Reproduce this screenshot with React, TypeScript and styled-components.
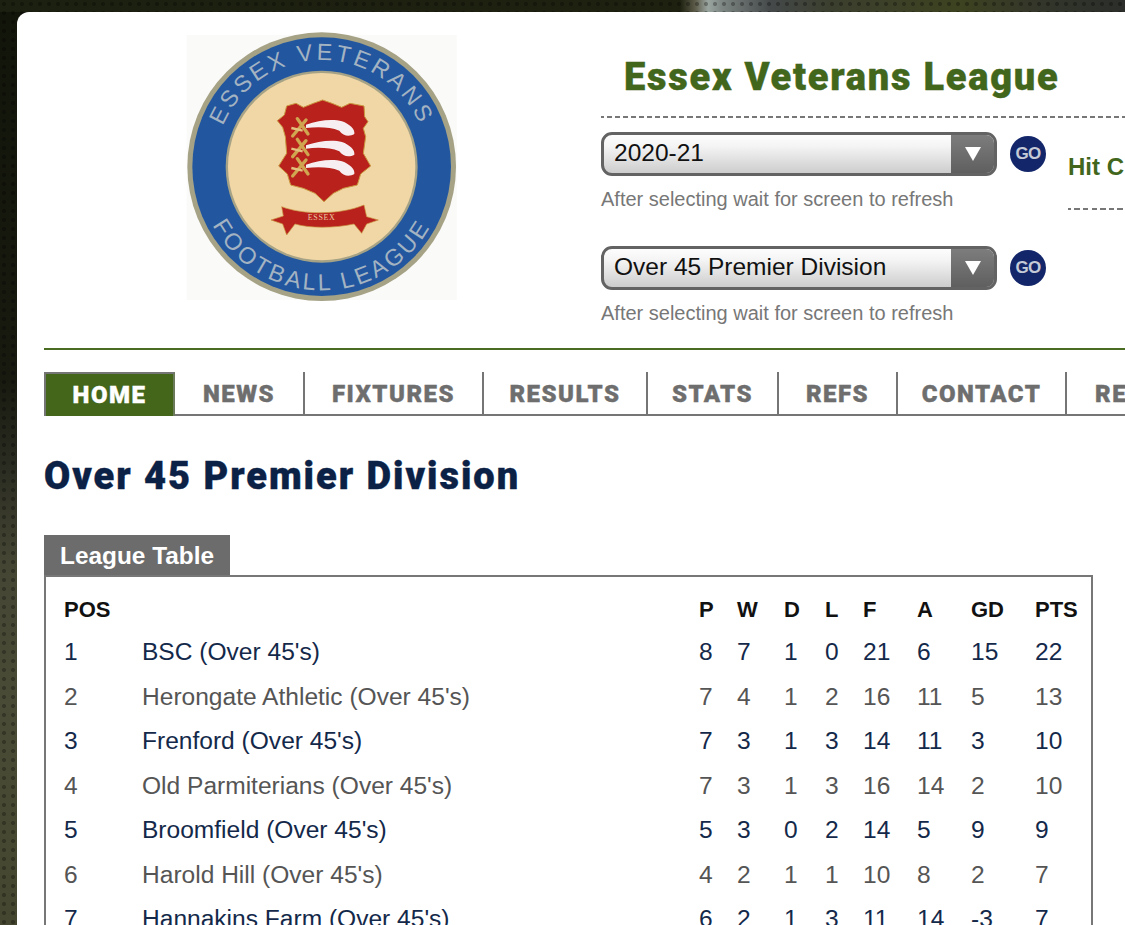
import React from "react";
import styled, { createGlobalStyle } from "styled-components";

const Global = createGlobalStyle`
  html, body { margin: 0; padding: 0; height: 925px; overflow: hidden; }
  body {
    font-family: "Liberation Sans", Arial, sans-serif;
    background-color: #1b1e10;
    background-image:
      radial-gradient(circle at 4px 4px, rgba(0,0,0,.28) 1.6px, transparent 2.4px),
      linear-gradient(90deg, #1c2010 0, #1e2110 680px, #5c5a48 695px, #9aa5a0 708px, #7d8683 722px, #45494a 770px, #3b3f2e 830px, #3d4220 960px, #33362a 1040px, #2b2e2a 1125px),
      linear-gradient(180deg, #12150a 0, #181a10 380px, #2c2d22 470px, #444533 560px, #4a4b36 700px, #45462f 925px);
    background-size: 9px 9px, 100% 12px, 100% 100%;
    background-repeat: repeat, no-repeat, no-repeat;
  }
`;

const Card = styled.div`
  margin: 12px 0 0 17px;
  width: 1108px;
  height: 913px;
  box-sizing: border-box;
  padding: 8px 0 0 27px;
  background: #fff;
  border-top-left-radius: 12px;
  overflow: hidden;
`;

const Header = styled.header`
  display: flex;
  align-items: flex-start;
  height: 328px;
  border-bottom: 2px solid #4a6b22;
`;

const LogoSvg = styled.svg`
  width: 300px;
  height: 290px;
  margin-left: 126px;
  flex: none;
`;

const Controls = styled.div`
  margin-left: 131px;
  width: 700px;
  flex: none;
`;

const SiteTitle = styled.h1`
  margin: 0;
  height: 98px;
  box-sizing: border-box;
  padding: 32px 0 0 23px;
  font-family: Roboto, sans-serif;
  font-weight: 900;
  font-size: 38px;
  line-height: 50px;
  letter-spacing: 1.75px;
  -webkit-text-stroke: 0.4px #41661c;
  color: #41661c;
  border-bottom: 2px dashed #8a8a8a;
  border-image: repeating-linear-gradient(90deg, #777 0 5px, transparent 5px 8px) 2;
`;

const Pickers = styled.div`
  display: flex;
`;

const PickerColumn = styled.div`
  width: 467px;
  flex: none;
`;

const PickerBlock = styled.div`
  margin-top: 14px;
  height: 100px;
`;

const PickerRow = styled.div`
  display: flex;
  align-items: center;
  gap: 13px;
`;

const SelectBox = styled.div`
  width: 396px;
  height: 44px;
  box-sizing: border-box;
  display: flex;
  border: 3px solid #636363;
  border-radius: 11px;
  overflow: hidden;
  background: linear-gradient(180deg, #fdfdfd 0%, #f4f4f4 30%, #cdcdcd 100%);
`;

const SelectValue = styled.div`
  flex: 1;
  padding-left: 10px;
  font-size: 24.5px;
  line-height: 36px;
  color: #111;
`;

const SelectArrow = styled.div`
  width: 43px;
  flex: none;
  display: flex;
  align-items: center;
  justify-content: center;
  background: linear-gradient(180deg, #7d7d7d, #5f5f5f);
`;

const GoButton = styled.div`
  width: 36px;
  height: 36px;
  flex: none;
  border-radius: 50%;
  background: #13266a;
  color: #c4cad6;
  font-size: 17px;
  font-weight: 700;
  letter-spacing: -0.8px;
  line-height: 36px;
  text-align: center;
`;

const Note = styled.div`
  margin-top: 11px;
  font-size: 20px;
  line-height: 24px;
  color: #777;
`;

const HitCounter = styled.div`
  margin-top: 36px;
  width: 57px;
  height: 56px;
  box-sizing: border-box;
  font-size: 24px;
  font-weight: 700;
  line-height: 26px;
  color: #41661c;
  white-space: nowrap;
  border-bottom: 2px dashed #777;
  border-image: repeating-linear-gradient(90deg, #777 0 5px, transparent 5px 8px) 2;
`;

const Nav = styled.nav`
  display: flex;
  margin-top: 22px;
  height: 44px;
  box-sizing: border-box;
  border-bottom: 2px solid #757575;
`;

const NavItem = styled.a<{ $active?: boolean; $width: number }>`
  width: ${(p) => p.$width}px;
  flex: none;
  box-sizing: border-box;
  text-align: center;
  white-space: nowrap;
  overflow: hidden;
  font-family: Roboto, sans-serif;
  font-weight: 900;
  font-size: 24px;
  letter-spacing: 1.5px;
  -webkit-text-stroke: 0.4px currentColor;
  color: ${(p) => (p.$active ? "#fff" : "#6e6e6e")};
  background: ${(p) => (p.$active ? "#43661a" : "transparent")};
  height: ${(p) => (p.$active ? "44px" : "42px")};
  border-right: 2px solid ${(p) => (p.$active ? "#6b7a58" : "#757575")};
  border-left: ${(p) => (p.$active ? "2px solid #757575" : "0")};
  border-top: ${(p) => (p.$active ? "2px solid #757575" : "0")};
  line-height: ${(p) => (p.$active ? "42px" : "44px")};
`;

const NavClip = styled.a`
  flex: none;
  width: 30px;
  padding-left: 28px;
  overflow: hidden;
  font-family: Roboto, sans-serif;
  font-weight: 900;
  font-size: 24px;
  letter-spacing: 1.5px;
  -webkit-text-stroke: 0.4px currentColor;
  line-height: 44px;
  color: #6e6e6e;
`;

const PageTitle = styled.h2`
  margin: 36px 0 0;
  font-family: Roboto, sans-serif;
  font-weight: 900;
  font-size: 38px;
  line-height: 48px;
  letter-spacing: 1.97px;
  -webkit-text-stroke: 0.4px #0b2145;
  color: #0b2145;
`;

const TabLabel = styled.div`
  margin-top: 35px;
  height: 40px;
  width: 186px;
  box-sizing: border-box;
  padding-left: 16px;
  background: #6c6c6c;
  color: #fff;
  font-size: 24.4px;
  font-weight: 700;
  line-height: 42px;
`;

const TableBox = styled.div`
  width: 1049px;
  box-sizing: border-box;
  border: 2px solid #777;
  padding: 12px 0 0 18px;
`;

const Table = styled.table`
  border-collapse: separate;
  border-spacing: 0;
  table-layout: fixed;
  width: 1028px;
`;

const HeadCell = styled.th`
  padding: 0;
  height: 42px;
  text-align: left;
  font-size: 22px;
  font-weight: 700;
  color: #111;
`;

const Row = styled.tr<{ $odd: boolean }>`
  height: 44.5px;
  color: ${(p) => (p.$odd ? "#14294a" : "#555")};
`;

const Cell = styled.td`
  padding: 0 0 2px;
  font-size: 24.55px;
  color: inherit;
  white-space: nowrap;
`;

const widths = [78, 557, 38, 47, 41, 38, 54, 54, 64, 57];
const heads = ["POS", "", "P", "W", "D", "L", "F", "A", "GD", "PTS"];
const rows: (string | number)[][] = [
  [1, "BSC (Over 45's)", 8, 7, 1, 0, 21, 6, 15, 22],
  [2, "Herongate Athletic (Over 45's)", 7, 4, 1, 2, 16, 11, 5, 13],
  [3, "Frenford (Over 45's)", 7, 3, 1, 3, 14, 11, 3, 10],
  [4, "Old Parmiterians (Over 45's)", 7, 3, 1, 3, 16, 14, 2, 10],
  [5, "Broomfield (Over 45's)", 5, 3, 0, 2, 14, 5, 9, 9],
  [6, "Harold Hill (Over 45's)", 4, 2, 1, 1, 10, 8, 2, 7],
  [7, "Hannakins Farm (Over 45's)", 6, 2, 1, 3, 11, 14, -3, 7],
];
const navItems: [string, number][] = [
  ["HOME", 131],
  ["NEWS", 130],
  ["FIXTURES", 179],
  ["RESULTS", 164],
  ["STATS", 131],
  ["REFS", 119],
  ["CONTACT", 169],
];

const Sword = ({ dy }: { dy: number }) => (
  <g transform={`translate(0 ${dy})`}>
    <path d="M368 348 L408 300 M382 296 L414 342" stroke="#cfa650" strokeWidth="10" fill="none" strokeLinecap="round" />
    <path d="M364 324 L398 332" stroke="#e2c07e" strokeWidth="7" />
    <path d="M408 314 C445 300 490 296 516 304 C538 312 556 328 553 342 C540 350 520 350 508 332 C480 320 440 320 408 324 Z" fill="#f6eef0" />
  </g>
);

const Logo = () => (
  <LogoSvg viewBox="0 0 900 870">
    <defs>
      <filter id="soft"><feGaussianBlur stdDeviation="2.2" /></filter>
      <path id="arcTop" d="M 135 440 A 320 320 0 0 1 775 440" />
      <path id="arcBottom" d="M 88 500 A 372 372 0 0 0 822 500" />
    </defs>
    <rect x="50" y="45" width="810" height="795" fill="#fafaf8" />
    <g filter="url(#soft)">
      <circle cx="455" cy="440" r="403" fill="#a5a286" />
      <circle cx="455" cy="440" r="388" fill="#22579f" />
      <circle cx="455" cy="440" r="288" fill="#a5a286" />
      <circle cx="455" cy="440" r="281" fill="#f1d6a6" />
      <path
        fill="#b9211f"
        stroke="#c9993f"
        strokeWidth="3"
        d="M350 258 L378 250 L400 262 L430 250 L458 240 L486 250 L515 262 L540 250 L582 258 L584 290 L594 305 L580 325 L587 350 L580 400 L602 438 L572 462 L562 495 L520 505 L490 520 L462 545 L435 520 L400 505 L362 495 L352 462 L326 438 L350 400 L346 350 L338 322 L322 302 L343 285 Z"
      />
      <Sword dy={0} />
      <Sword dy={62} />
      <Sword dy={120} />
      <path
        fill="#b9211f"
        stroke="#c9993f"
        strokeWidth="2"
        d="M335 560 C400 585 510 585 582 555 L590 590 L625 600 L590 612 L575 640 L552 612 C490 625 420 625 375 612 L350 645 L338 612 L303 600 L340 588 Z"
      />
    </g>
    <text fontFamily="Liberation Serif, serif" fontSize="24" fill="#e8c9a0" letterSpacing="2" x="455" y="600" textAnchor="middle">ESSEX</text>
    <text fontFamily="Liberation Sans, sans-serif" fontSize="70" fill="#a3b3c2" letterSpacing="9">
      <textPath href="#arcTop" startOffset="50%" textAnchor="middle">ESSEX VETERANS</textPath>
    </text>
    <text fontFamily="Liberation Sans, sans-serif" fontSize="70" fill="#a3b3c2" letterSpacing="9">
      <textPath href="#arcBottom" startOffset="50%" textAnchor="middle">FOOTBALL LEAGUE</textPath>
    </text>
  </LogoSvg>
);

const Picker = ({ value }: { value: string }) => (
  <PickerBlock>
    <PickerRow>
      <SelectBox>
        <SelectValue>{value}</SelectValue>
        <SelectArrow>
          <svg width="18" height="16" viewBox="0 0 18 16">
            <path d="M1 1 H17 L9 15 Z" fill="#fff" />
          </svg>
        </SelectArrow>
      </SelectBox>
      <GoButton>GO</GoButton>
    </PickerRow>
    <Note>After selecting wait for screen to refresh</Note>
  </PickerBlock>
);

export default function App() {
  return (
    <>
      <Global />
      <Card>
        <Header>
          <Logo />
          <Controls>
            <SiteTitle>Essex Veterans League</SiteTitle>
            <Pickers>
              <PickerColumn>
                <Picker value="2020-21" />
                <Picker value="Over 45 Premier Division" />
              </PickerColumn>
              <HitCounter>Hit C</HitCounter>
            </Pickers>
          </Controls>
        </Header>
        <Nav>
          {navItems.map(([label, w], i) => (
            <NavItem key={label} $active={i === 0} $width={w}>{label}</NavItem>
          ))}
          <NavClip>RE</NavClip>
        </Nav>
        <PageTitle>Over 45 Premier Division</PageTitle>
        <TabLabel>League Table</TabLabel>
        <TableBox>
          <Table>
            <colgroup>
              {widths.map((w, i) => <col key={i} style={{ width: w }} />)}
            </colgroup>
            <thead>
              <tr>{heads.map((h, i) => <HeadCell key={i}>{h}</HeadCell>)}</tr>
            </thead>
            <tbody>
              {rows.map((r, i) => (
                <Row key={i} $odd={i % 2 === 0}>
                  {r.map((c, j) => <Cell key={j}>{c}</Cell>)}
                </Row>
              ))}
            </tbody>
          </Table>
        </TableBox>
      </Card>
    </>
  );
}
